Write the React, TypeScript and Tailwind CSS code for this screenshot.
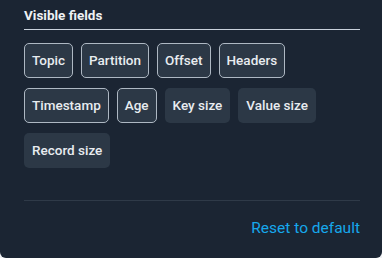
import { useState } from "react";

const FIELDS = [
  { name: "Topic", on: true },
  { name: "Partition", on: true },
  { name: "Offset", on: true },
  { name: "Headers", on: true },
  { name: "Timestamp", on: true },
  { name: "Age", on: true },
  { name: "Key size", on: false },
  { name: "Value size", on: false },
  { name: "Record size", on: false },
];

export default function App() {
  const [fields, setFields] = useState(FIELDS);

  const toggle = (name: string) => {
    setFields(fields.map((f) => (f.name === name ? { ...f, on: !f.on } : f)));
  };

  return (
    <div className="w-[382px] h-[258px] bg-[#eef0f3] font-['Roboto',sans-serif]">
      <div className="h-full bg-[#1b2533] rounded-b-[6px] flex flex-col pl-6 pr-[22px] pt-[7px]">
        <div className="text-[13.5px] font-bold leading-[16px] text-[#eef1f4] pb-[6px] border-b border-[#c9d1db]">
          Visible fields
        </div>

        <div className="mt-[13px] flex flex-wrap gap-x-2 gap-y-[10px]">
          {fields.map((f) => (
            <button
              key={f.name}
              onClick={() => toggle(f.name)}
              className={
                "h-[35px] px-[7px] rounded-[5px] bg-[#2c3846] text-[13.5px] font-medium text-[#e8ecf0] border " +
                (f.on ? "border-[#aeb8c3]" : "border-transparent")
              }
            >
              {f.name}
            </button>
          ))}
        </div>

        <div className="mt-[32px] border-t border-[#2f3a48]" />

        <div className="mt-[15px] text-right">
          <button
            onClick={() => setFields(FIELDS)}
            className="text-[15.5px] leading-[20px] text-[#16a8ec]"
          >
            Reset to default
          </button>
        </div>
      </div>
    </div>
  );
}
